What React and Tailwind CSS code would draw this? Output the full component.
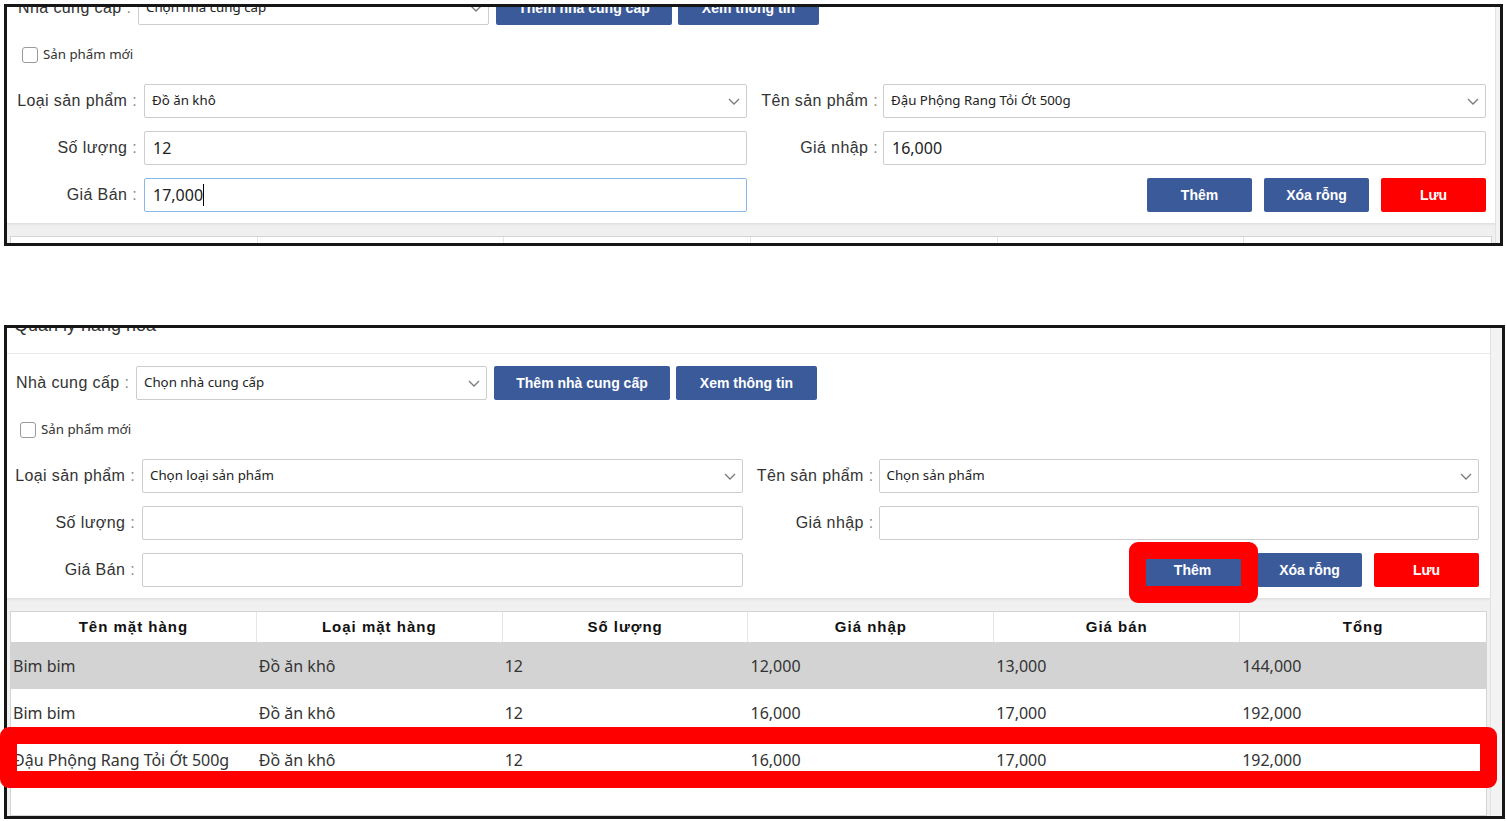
import React from "react";

const SANS = "font-['Liberation_Sans',Arial,sans-serif]";
const NOTO = "font-['Noto_Sans',sans-serif]";

function Chevron() {
  return (
    <svg width="12" height="7" viewBox="0 0 12 7" className="shrink-0">
      <path d="M1 1l5 5 5-5" fill="none" stroke="#7a7a7a" strokeWidth="1.3" />
    </svg>
  );
}

function Label({ children }) {
  return (
    <div className={`${SANS} text-[16px] tracking-[0.4px] text-[#333] whitespace-nowrap leading-none`}>
      {children}
      <span className="text-[#8a8a8a]"> :</span>
    </div>
  );
}

function Select({ value, className }) {
  return (
    <div className={`h-[34px] min-w-0 border border-[#cdcdcd] rounded-[2px] bg-white flex items-center pl-[7px] pr-[6px] ${className}`}>
      <span className={`${NOTO} flex-1 text-[13.3px] text-[#222] whitespace-nowrap`}>{value}</span>
      <Chevron />
    </div>
  );
}

function Field({ value, focused }) {
  return (
    <div
      className={`min-w-0 h-[34px] border rounded-[2px] bg-white flex items-center pl-[8px] ${NOTO} text-[16px] text-[#222] ${
        focused ? "border-[#8ab6ea]" : "border-[#cdcdcd]"
      }`}
    >
      <span>{value}</span>
      {focused && <span className="w-px h-[22px] bg-black" />}
    </div>
  );
}

function Btn({ children, red, className }) {
  return (
    <div
      className={`h-[34px] rounded-[2px] flex items-center justify-center text-white text-[14px] font-bold ${SANS} ${
        red ? "bg-[#ff0000]" : "bg-[#3b5a9a]"
      } ${className}`}
    >
      {children}
    </div>
  );
}

function LabelCell({ children, right }) {
  return (
    <div className={`${right ? "pr-[5px]" : "pr-[7px]"} flex justify-end items-center min-w-0`}>
      <Label>{children}</Label>
    </div>
  );
}

function Form({ d, annot, pad }) {
  return (
    <div className={`shrink-0 pt-[12px] pb-[11px] ${pad}`}>
      <div className="flex items-center h-[34px]">
        <div className="w-[120px] shrink-0">
          <Label>Nhà cung cấp</Label>
        </div>
        <Select value="Chọn nhà cung cấp" className="w-[351px] shrink-0" />
        <Btn className="ml-[7px] w-[176px] shrink-0">Thêm nhà cung cấp</Btn>
        <Btn className="ml-[6px] w-[141px] shrink-0">Xem thông tin</Btn>
      </div>
      <div className="h-[59px] flex items-center pl-[4px] gap-[5px]">
        <div className="w-[16px] h-[16px] border border-[#9a9a9a] rounded-[3px] bg-white" />
        <span className={`${NOTO} text-[13.3px] text-[#333]`}>Sản phẩm mới</span>
      </div>
      <div className="grid grid-cols-[126px_minmax(0,1fr)_136px_minmax(0,1fr)] auto-rows-[34px] gap-y-[13px]">
        <LabelCell>Loại sản phẩm</LabelCell>
        <Select value={d.loai} />
        <LabelCell right>Tên sản phẩm</LabelCell>
        <Select value={d.ten} />

        <LabelCell>Số lượng</LabelCell>
        <Field value={d.sl} />
        <LabelCell right>Giá nhập</LabelCell>
        <Field value={d.gn} />

        <LabelCell>Giá Bán</LabelCell>
        <Field value={d.gb} focused={d.focus} />
        <div />
        <div className="flex justify-end gap-[12px]">
          <div className="relative">
            <Btn className="w-[105px]">Thêm</Btn>
            {annot && (
              <div className="absolute left-[-11px] top-[-11px] w-[129px] h-[61px] border-[17px] border-[#ff0000] rounded-[9px]" />
            )}
          </div>
          <Btn className="w-[105px]">Xóa rỗng</Btn>
          <Btn red className="w-[105px]">Lưu</Btn>
        </div>
      </div>
    </div>
  );
}

const HEADERS = ["Tên mặt hàng", "Loại mặt hàng", "Số lượng", "Giá nhập", "Giá bán", "Tổng"];
const ROWS = [
  ["Bim bim", "Đồ ăn khô", "12", "12,000", "13,000", "144,000"],
  ["Bim bim", "Đồ ăn khô", "12", "16,000", "17,000", "192,000"],
  ["Đậu Phộng Rang Tỏi Ớt 500g", "Đồ ăn khô", "12", "16,000", "17,000", "192,000"],
];

function Table() {
  return (
    <div className="h-full bg-white border border-[#d4d4d4]">
      <div className="grid grid-cols-6 h-[30px]">
        {HEADERS.map((h, i) => (
          <div
            key={h}
            className={`flex items-center justify-center ${SANS} text-[15px] font-bold tracking-[1px] text-[#111] ${
              i < 5 ? "border-r border-[#e6e6e6]" : ""
            }`}
          >
            {h}
          </div>
        ))}
      </div>
      {ROWS.map((r, ri) => (
        <div key={ri} className={`grid grid-cols-6 h-[47px] ${ri === 0 ? "bg-[#d3d3d3]" : "bg-white"}`}>
          {r.map((c, ci) => (
            <div key={ci} className={`flex items-center pl-[2px] ${NOTO} text-[16px] text-[#333] whitespace-nowrap`}>
              {c}
            </div>
          ))}
        </div>
      ))}
    </div>
  );
}

function PanelContent({ d, annot, pad }) {
  return (
    <>
      <div className="shrink-0 h-[26px] border-b border-[#e8e8e8] overflow-hidden pl-[7px]">
        <div className={`${SANS} text-[18px] leading-[22px] text-[#333] -mt-[14px]`}>Quản lý hàng hóa</div>
      </div>
      <Form d={d} annot={annot} pad={pad} />
      <div className="flex-1 bg-[#f0f0f0] pt-[13px] pl-[3px] pr-[3px] shadow-[inset_0_3px_3px_-2px_rgba(0,0,0,0.10)]">
        <Table />
      </div>
    </>
  );
}

export default function App() {
  const top = {
    loai: "Đồ ăn khô",
    ten: "Đậu Phộng Rang Tỏi Ớt 500g",
    sl: "12",
    gn: "16,000",
    gb: "17,000",
    focus: true,
  };
  const bottom = {
    loai: "Chọn loại sản phẩm",
    ten: "Chọn sản phẩm",
    sl: "",
    gn: "",
    gb: "",
    focus: false,
  };
  return (
    <div className="w-[1507px] h-[821px] bg-white overflow-hidden pt-[4px] pl-[4px]">
      <div className="w-[1499px] h-[242px] border-[3px] border-[#161616] flex overflow-hidden bg-white">
        <div className="flex-1 flex flex-col -mt-[54px]">
          <PanelContent d={top} pad="pl-[11px] pr-[9px]" />
        </div>
        <div className="w-[5px] bg-[#f3f3f3] border-l border-[#e2e2e2]" />
      </div>
      <div className="h-[79px]" />
      <div className="relative w-[1501px] h-[494px]">
        <div className="w-full h-full border-[3px] border-[#161616] flex bg-white">
          <div className="flex-1 flex flex-col">
            <PanelContent d={bottom} annot pad="pl-[9px] pr-[11px]" />
          </div>
          <div className="w-[12px] bg-[#f3f3f3] border-l border-[#e2e2e2]" />
        </div>
        <div className="absolute left-[-4px] top-[402px] w-[1497px] h-[61px] border-[17px] border-[#ff0000] rounded-[9px]" />
      </div>
    </div>
  );
}
